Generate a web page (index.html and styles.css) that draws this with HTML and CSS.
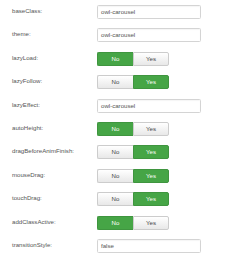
FILE: index.html
```html
<!DOCTYPE html>
<html>
<head>
<meta charset="utf-8">
<link rel="stylesheet" href="styles.css">
</head>
<body>
<div class="form">
  <div class="row"><div class="label">baseClass:</div><div class="control"><div class="input">owl-carousel</div></div></div>
  <div class="row"><div class="label">theme:</div><div class="control"><div class="input">owl-carousel</div></div></div>
  <div class="row"><div class="label">lazyLoad:</div><div class="control"><div class="toggle"><span class="seg on">No</span><span class="seg">Yes</span></div></div></div>
  <div class="row"><div class="label">lazyFollow:</div><div class="control"><div class="toggle"><span class="seg">No</span><span class="seg on">Yes</span></div></div></div>
  <div class="row"><div class="label">lazyEffect:</div><div class="control"><div class="input">owl-carousel</div></div></div>
  <div class="row"><div class="label">autoHeight:</div><div class="control"><div class="toggle"><span class="seg on">No</span><span class="seg">Yes</span></div></div></div>
  <div class="row"><div class="label">dragBeforeAnimFinish:</div><div class="control"><div class="toggle"><span class="seg">No</span><span class="seg on">Yes</span></div></div></div>
  <div class="row"><div class="label">mouseDrag:</div><div class="control"><div class="toggle"><span class="seg">No</span><span class="seg on">Yes</span></div></div></div>
  <div class="row"><div class="label">touchDrag:</div><div class="control"><div class="toggle"><span class="seg">No</span><span class="seg on">Yes</span></div></div></div>
  <div class="row"><div class="label">addClassActive:</div><div class="control"><div class="toggle"><span class="seg on">No</span><span class="seg">Yes</span></div></div></div>
  <div class="row"><div class="label">transitionStyle:</div><div class="control"><div class="input">false</div></div></div>
</div>
</body>
</html>
```
FILE: styles.css
```css
html, body {
  margin: 0;
  padding: 0;
  background: #ffffff;
}
body {
  font-family: "Liberation Sans", Arial, sans-serif;
  font-size: 6.1px;
  color: #555555;
}
.form {
  display: flex;
  flex-direction: column;
  padding-top: 5px;
}
.row {
  display: flex;
  height: 14px;
  margin-bottom: 9.4px;
}
.label {
  width: 97px;
  padding-left: 12px;
  box-sizing: border-box;
  line-height: 11px;
  color: #555555;
}
.control {
  display: flex;
}
.input {
  box-sizing: border-box;
  width: 104px;
  height: 14px;
  border: 1px solid #d4d4d4;
  border-radius: 1.5px;
  padding-left: 3px;
  line-height: 12px;
  color: #555555;
  box-shadow: inset 0 1px 1px rgba(0,0,0,0.04);
}
.toggle {
  display: flex;
  height: 14px;
}
.seg {
  box-sizing: border-box;
  width: 36px;
  height: 14px;
  line-height: 12px;
  text-align: center;
  border: 1px solid #cccccc;
  background: linear-gradient(#ffffff, #e8e8e8);
  color: #444444;
}
.seg:first-child {
  border-radius: 2px 0 0 2px;
  border-right: none;
}
.seg:last-child {
  border-radius: 0 2px 2px 0;
}
.seg.on {
  background: #46a546;
  border-color: #3f953f;
  color: #ffffff;
}
```
